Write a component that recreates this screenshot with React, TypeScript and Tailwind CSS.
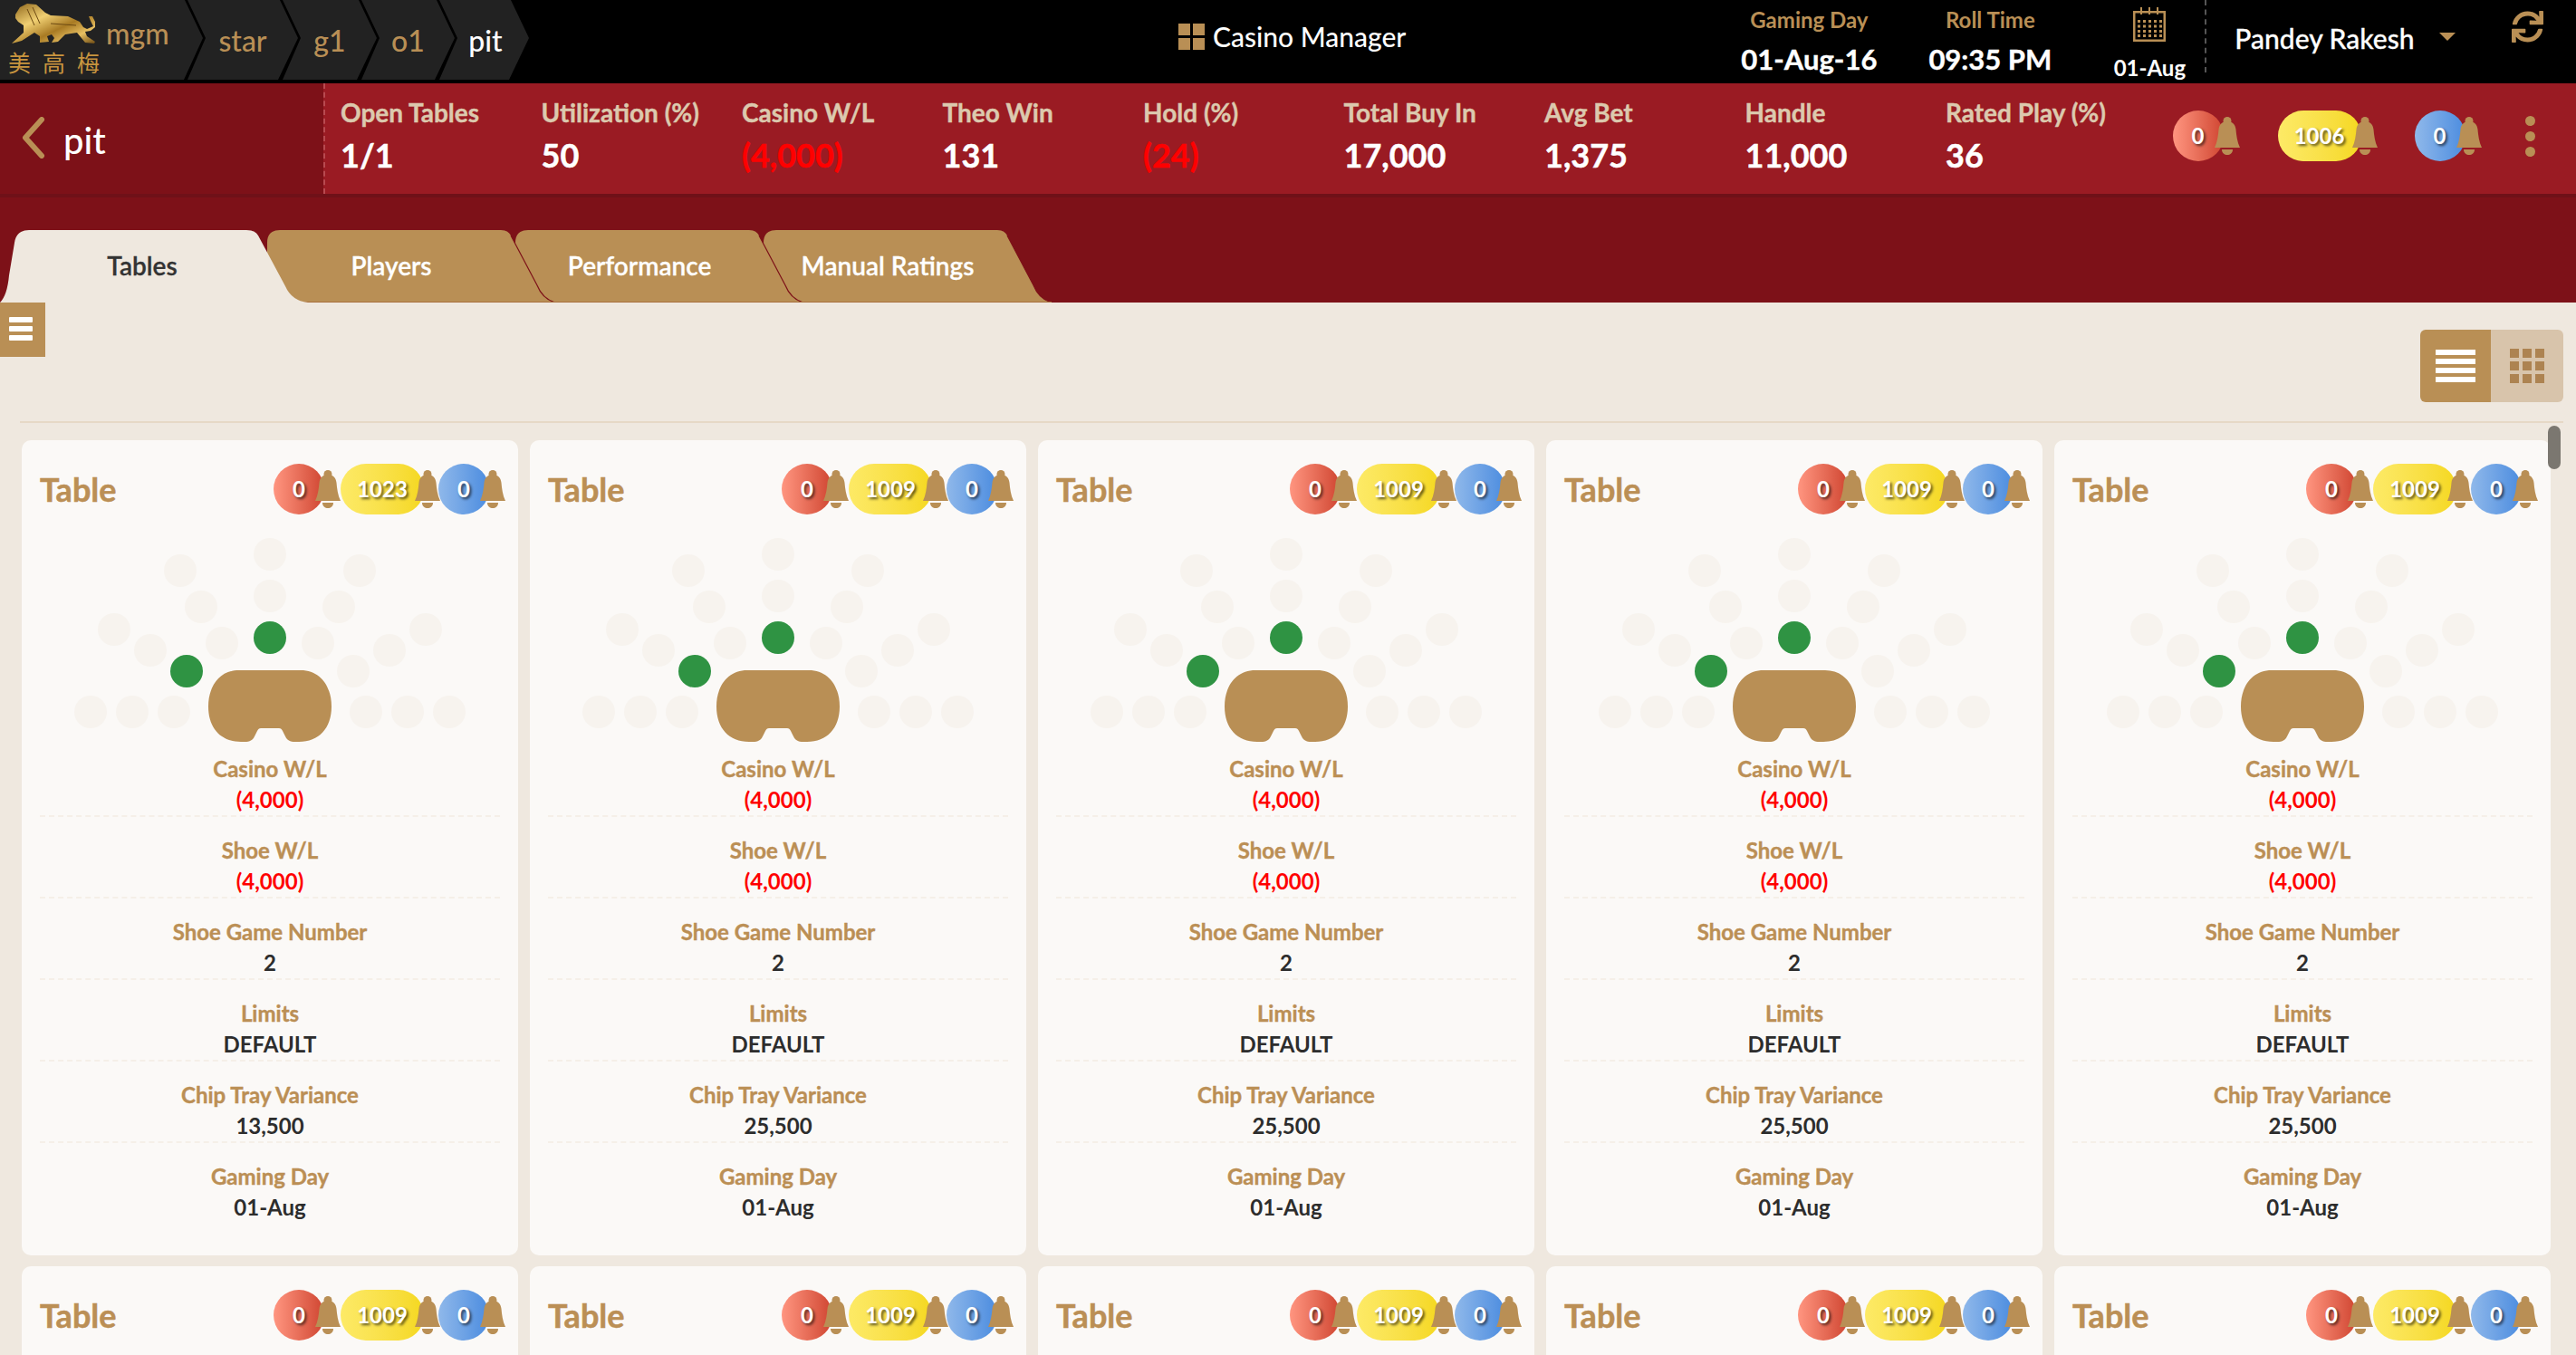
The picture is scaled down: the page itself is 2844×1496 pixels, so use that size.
import React from 'react';
import { FaSync } from 'react-icons/fa';

const stats = [
    { label: 'Open Tables', value: '1/1' },
    { label: 'Utilization (%)', value: '50' },
    { label: 'Casino W/L', value: '(4,000)', negative: true },
    { label: 'Theo Win', value: '131' },
    { label: 'Hold (%)', value: '(24)', negative: true },
    { label: 'Total Buy In', value: '17,000' },
    { label: 'Avg Bet', value: '1,375' },
    { label: 'Handle', value: '11,000' },
    { label: 'Rated Play (%)', value: '36' },
];

const seats = [
    [298, 612], [199, 630], [397, 630], [298, 658], [222, 670], [374, 670], [126, 695], [470, 695],
    [245, 710], [351, 710], [166, 718], [430, 718], [390, 741],
    [100, 786], [146, 786], [192, 786], [404, 786], [450, 786], [496, 786],
];
const activeSeats = [[298, 704], [206, 741]];

const cards = [
    { alerts: '1023', variance: '13,500' },
    { alerts: '1009', variance: '25,500' },
    { alerts: '1009', variance: '25,500' },
    { alerts: '1009', variance: '25,500' },
    { alerts: '1009', variance: '25,500' },
    { alerts: '1009', variance: '25,500' },
    { alerts: '1009', variance: '25,500' },
    { alerts: '1009', variance: '25,500' },
    { alerts: '1009', variance: '25,500' },
    { alerts: '1009', variance: '25,500' },
];

const Bell = ({ className }: { className: string }) => (
    <svg viewBox="0 0 28 42" className={className} fill="#b98f55">
        <circle cx="14" cy="4.5" r="4.5" />
        <path d="M0 34 C3 28 4 20 4.5 14 C5 8 9 5 14 5 C19 5 23 8 23.5 14 C24 20 25 28 28 34 Z" />
        <path d="M8 36 H20 C20 40 17 42 14 42 C11 42 8 40 8 36 Z" />
    </svg>
);

const pillColors = {
    red: 'from-[#ff9580] to-[#cf4430]',
    yellow: 'from-[#fdea66] to-[#f5d81c]',
    blue: 'from-[#8fb8ea] to-[#4b8cdf]',
};

const Alert = ({ color, value, width }: { color: 'red' | 'yellow' | 'blue'; value: string; width: string }) => (
    <div className="flex items-center">
        <div className={`flex h-14 items-center justify-center rounded-full bg-gradient-to-r text-[24px] font-bold text-white [text-shadow:2px_2px_3px_rgba(0,0,0,0.65)] ${pillColors[color]} ${width}`}>
            {value}
        </div>
        <Bell className="relative z-10 -ml-[10px] h-[42px] w-[28px]" />
    </div>
);

const Lion = () => (
    <svg viewBox="0 0 120 50" className="h-[50px] w-[120px]">
        <defs>
            <linearGradient id="lionGold" x1="0" y1="0" x2="1" y2="1">
                <stop offset="0" stopColor="#8a6118" />
                <stop offset="0.35" stopColor="#f0cf72" />
                <stop offset="0.6" stopColor="#a87a23" />
                <stop offset="0.8" stopColor="#e8c062" />
                <stop offset="1" stopColor="#6d4a12" />
            </linearGradient>
        </defs>
        <path
            fill="url(#lionGold)"
            d="M17 16 L22 8 L30 4 L40 5 L50 14 L56 17 L75 18 L88 24 L92 30 L96 32 L103 29 L100 23 L98 18 L102 18 L105 24 L105 30 L100 34 L94 35 L96 40 L105 46 L104 48 L94 47 L85 36 L72 38 L64 46 L57 47 L60 42 L57 38 L52 40 L54 46 L44 47 L44 40 L38 36 L24 45 L13 48 L15 46 L26 36 L26 28 L20 24 L17 20 Z"
        />
        <path d="M30 10 L38 28 M36 8 L44 26 M56 26 L84 28" stroke="#6d4a12" strokeWidth="1" fill="none" />
    </svg>
);

const crumbClass =
    'flex h-[88px] items-center justify-center bg-[#222222] pt-[2px] text-[32px] font-medium text-[#b98f55] -ml-[17px] [clip-path:polygon(0_0,calc(100%-20px)_0,100%_42px,calc(100%-22px)_88px,0_88px,20px_42px)]';

const TopBar = () => (
    <div className="flex h-[92px] bg-black [font-family:Lato,sans-serif]">
        <div className="flex h-[88px] w-[224px] gap-0 bg-[#222222] [clip-path:polygon(0_0,204px_0,224px_42px,203px_88px,0_88px)]">
            <div className="flex w-[120px] shrink-0 flex-col">
                <Lion />
                <div className="mt-[2px] pl-[9px] text-[25px] leading-[33px] tracking-[13px] whitespace-nowrap text-[#c9953f] [font-family:'Noto_Sans_CJK_TC',sans-serif]">美高梅</div>
            </div>
            <span className="-ml-[3px] pt-[17px] text-[32px] font-medium leading-[40px] text-[#b98f55]">mgm</span>
        </div>
        <div className={`${crumbClass} w-[122px]`}>star</div>
        <div className={`${crumbClass} w-[104px]`}>g1</div>
        <div className={`${crumbClass} w-[103px]`}>o1</div>
        <div className={`${crumbClass} w-[99px] pl-[3px] !text-white`}>pit</div>
        <div className="ml-[717px] flex h-[80px] items-center gap-[9px]">
            <div className="grid grid-cols-2 gap-[3px]">
                <span className="h-[13px] w-[13px] bg-[#b98f55]" />
                <span className="h-[13px] w-[13px] bg-[#b98f55]" />
                <span className="h-[13px] w-[13px] bg-[#b98f55]" />
                <span className="h-[13px] w-[13px] bg-[#b98f55]" />
            </div>
            <span className="text-[30px] font-medium text-white">Casino Manager</span>
        </div>
        <div className="ml-[347px] flex w-[196px] flex-col items-center pt-[6px]">
            <span className="text-[24px] leading-[32px] font-bold text-[#b98f55]">Gaming Day</span>
            <span className="mt-[7px] text-[31px] leading-[40px] font-bold text-white [-webkit-text-stroke:0.4px]">01-Aug-16</span>
        </div>
        <div className="flex w-[204px] flex-col items-center pt-[6px]">
            <span className="text-[24px] leading-[32px] font-bold text-[#b98f55]">Roll Time</span>
            <span className="mt-[7px] text-[31px] leading-[40px] font-bold text-white [-webkit-text-stroke:0.4px]">09:35 PM</span>
        </div>
        <div className="ml-[13px] flex w-[122px] flex-col items-center pt-[8px]">
            <svg viewBox="0 0 36 38" className="h-[38px] w-[36px]" fill="#b98f55">
                <path fillRule="evenodd" d="M0 4 H36 V38 H0 Z M2.5 6.5 V35.5 H33.5 V6.5 Z" />
                <rect x="8" y="0" width="2" height="8" />
                <rect x="17" y="0" width="2" height="8" />
                <rect x="26" y="0" width="2" height="8" />
                {[14, 19.5, 25, 30].map((y) =>
                    [5, 11, 17, 23, 29].map((x) => <rect key={`${x}-${y}`} x={x} y={y} width="3" height="3" />),
                )}
            </svg>
            <span className="mt-[14px] text-[24px] leading-[30px] font-bold text-white">01-Aug</span>
        </div>
        <div className="h-[80px] border-l-2 border-dashed border-[#555555]" />
        <span className="ml-[31px] pt-[21px] text-[30px] leading-[42px] font-medium text-white [-webkit-text-stroke:0.3px]">Pandey Rakesh</span>
        <div className="ml-[27px] mt-[36px] h-0 w-0 border-x-[9px] border-t-[9px] border-x-transparent border-t-[#b98f55]" />
        <FaSync className="ml-[62px] mt-[12px] h-[35px] w-[35px] text-[#b98f55]" />
    </div>
);

const StatsBar = () => (
    <div className="flex h-[126px] border-b-4 border-[#6f1118] [font-family:Lato,sans-serif]">
        <div className="flex w-[357px] items-center gap-[20px] bg-[#7d1118] pl-[24px] pb-[2px]">
            <svg viewBox="0 0 26 46" className="h-[46px] w-[26px]" fill="none" stroke="#b98f55" strokeWidth="6" strokeLinecap="round" strokeLinejoin="round">
                <path d="M22 3 L4 23 L22 43" />
            </svg>
            <span className="mt-[6px] text-[40px] font-medium leading-[48px] text-white">pit</span>
        </div>
        <div className="flex flex-1 items-start border-l-2 border-dashed border-[#b84a50] bg-[#9a1b23] pl-[17px] pt-[13px]">
            <div className="grid grid-cols-[repeat(9,221.5px)]">
                {stats.map((s) => (
                    <div key={s.label} className="flex flex-col">
                        <span className="text-[28px] leading-[38px] font-bold whitespace-nowrap text-[#dcc9ae] [-webkit-text-stroke:0.4px]">{s.label}</span>
                        <span className={`mt-[6px] text-[36px] leading-[44px] font-bold [-webkit-text-stroke:0.5px] ${s.negative ? 'text-[#ff0000]' : 'text-white'}`}>{s.value}</span>
                    </div>
                ))}
            </div>
            <div className="mt-[17px] ml-[29px] flex items-center">
                <Alert color="red" value="0" width="w-[56px]" />
                <div className="ml-[42px]"><Alert color="yellow" value="1006" width="w-[92px]" /></div>
                <div className="ml-[41px]"><Alert color="blue" value="0" width="w-[56px]" /></div>
                <div className="ml-[48px] flex flex-col gap-[6px]">
                    <span className="h-[11px] w-[11px] rounded-full bg-[#b98f55]" />
                    <span className="h-[11px] w-[11px] rounded-full bg-[#b98f55]" />
                    <span className="h-[11px] w-[11px] rounded-full bg-[#b98f55]" />
                </div>
            </div>
        </div>
    </div>
);

const Tab = ({ label, z }: { label: string; z: string }) => (
    <div className={`relative -mr-[48px] flex h-[80px] w-[322px] items-center justify-center pr-[40px] pb-[2px] text-[28px] font-semibold text-white [-webkit-text-stroke:0.3px] ${z}`}>
        <svg viewBox="0 0 322 80" className="absolute inset-0 h-[80px] w-[322px]">
            <path fill="#b98f55" d="M4 80 L4 14 Q4 0 18 0 L262 0 Q270 0 273 6 L302 61 Q308 76 322 80 Z" />
            <path fill="none" stroke="#7d1118" strokeWidth="1.2" d="M273 6 L302 61 Q308 76 322 80" />
            <rect x="4" y="79" width="318" height="1" fill="#a9703f" />
        </svg>
        <span className="relative">{label}</span>
    </div>
);

const Tabs = () => (
    <div className="flex h-[116px] items-end bg-[#7d1118] [font-family:Lato,sans-serif]">
        <div className="relative z-40 flex h-[80px] w-[340px] items-center justify-center pr-[26px] pb-[2px] text-[28px] font-semibold text-[#333333] [-webkit-text-stroke:0.3px]">
            <svg viewBox="0 0 340 80" className="absolute inset-0 h-[80px] w-[340px]">
                <path fill="#efe8df" d="M0 80 Q8 72 10 50 L16 14 Q18 0 32 0 L272 0 Q282 0 285 6 L315 62 Q322 78 340 80 Z" />
            </svg>
            <span className="relative">Tables</span>
        </div>
        <div className="-ml-[49px] flex">
            <Tab label="Players" z="z-30" />
            <Tab label="Performance" z="z-20" />
            <Tab label="Manual Ratings" z="z-10" />
        </div>
    </div>
);

const Toolbar = () => (
    <div className="flex h-[131px] items-start justify-between pr-[14px]">
        <div className="flex h-[60px] w-[50px] flex-col items-start gap-[4px] bg-[#b98f55] pt-[16px] pl-[10px]">
            <span className="h-[6px] w-[26px] rounded-[1px] bg-white" />
            <span className="h-[6px] w-[26px] rounded-[1px] bg-white" />
            <span className="h-[6px] w-[26px] rounded-[1px] bg-white" />
        </div>
        <div className="mt-[30px] flex h-[80px] w-[158px] overflow-hidden rounded-[6px]">
            <div className="flex w-[78px] flex-col items-center justify-center gap-[4px] bg-[#b98f55]">
                <span className="h-[6px] w-[44px] bg-white" />
                <span className="h-[6px] w-[44px] bg-white" />
                <span className="h-[6px] w-[44px] bg-white" />
                <span className="h-[6px] w-[44px] bg-white" />
            </div>
            <div className="flex flex-1 items-center justify-center bg-[#d8c4ab]">
                <div className="grid grid-cols-3 gap-[4px]">
                    {Array.from({ length: 9 }).map((_, i) => (
                        <span key={i} className="h-[10px] w-[10px] bg-[#ad8351]" />
                    ))}
                </div>
            </div>
        </div>
    </div>
);

const SeatMap = () => (
    <svg viewBox="0 0 548 264" className="h-[264px] w-[548px]">
        {seats.map(([x, y]) => (
            <circle key={`${x}-${y}`} cx={x - 24} cy={y - 568} r="18" fill="#f7f3ee" />
        ))}
        {activeSeats.map(([x, y]) => (
            <circle key={`${x}-${y}`} cx={x - 24} cy={y - 568} r="18" fill="#2f9343" />
        ))}
        <path
            fill="#b98f55"
            d="M240 172 H308 C330 172 342 190 342 212 C342 236 328 251 306 251 H302 C296 251 293 249 291 245 L288 239 C287 237 286 236 284 236 H264 C262 236 261 237 260 239 L257 245 C255 249 252 251 246 251 H242 C220 251 206 236 206 212 C206 190 218 172 240 172 Z"
        />
    </svg>
);

const Row = ({ label, value, red, last }: { label: string; value: string; red?: boolean; last?: boolean }) => (
    <div className={`mx-[20px] flex flex-col items-center ${last ? '' : 'mb-[20px] border-b-2 border-dashed border-[#f5efe8]'}`}>
        <span className="text-[24px] leading-[34px] font-bold text-[#bb8f55] [-webkit-text-stroke:0.4px]">{label}</span>
        <span className={`text-[24px] leading-[34px] font-bold ${red ? 'text-[#ff0000]' : 'text-[#2d2d2d]'}`}>{value}</span>
    </div>
);

const TableCard = ({ alerts, variance }: { alerts: string; variance: string }) => (
    <div className="h-[900px] w-[548px] rounded-[10px] bg-[#fbf9f7] [font-family:Lato,sans-serif]">
        <div className="flex items-center justify-between pt-[26px] pr-[14px] pl-[20px]">
            <span className="text-[36px] font-bold text-[#bb8f55] [-webkit-text-stroke:0.5px]">Table</span>
            <div className="flex items-center gap-0">
                <Alert color="red" value="0" width="w-[56px]" />
                <Alert color="yellow" value={alerts} width="w-[92px]" />
                <div className="-ml-[2px]"><Alert color="blue" value="0" width="w-[56px]" /></div>
            </div>
        </div>
        <SeatMap />
        <Row label="Casino W/L" value="(4,000)" red />
        <Row label="Shoe W/L" value="(4,000)" red />
        <Row label="Shoe Game Number" value="2" />
        <Row label="Limits" value="DEFAULT" />
        <Row label="Chip Tray Variance" value={variance} />
        <Row label="Gaming Day" value="01-Aug" last />
    </div>
);

export default function App() {
    return (
        <div className="relative h-[1496px] w-[2844px] overflow-hidden bg-[#efe8df]">
            <TopBar />
            <StatsBar />
            <Tabs />
            <Toolbar />
            <div className="mr-[14px] ml-[22px] h-[2px] bg-[#e6d8c6]" />
            <div className="grid grid-cols-[repeat(5,548px)] gap-x-[13px] gap-y-[12px] pt-[19px] pl-[24px]">
                {cards.map((c, i) => (
                    <TableCard key={i} alerts={c.alerts} variance={c.variance} />
                ))}
            </div>
            <div className="absolute top-[470px] left-[2813px] h-[48px] w-[14px] rounded-full bg-[#7b7770]" />
        </div>
    );
}
